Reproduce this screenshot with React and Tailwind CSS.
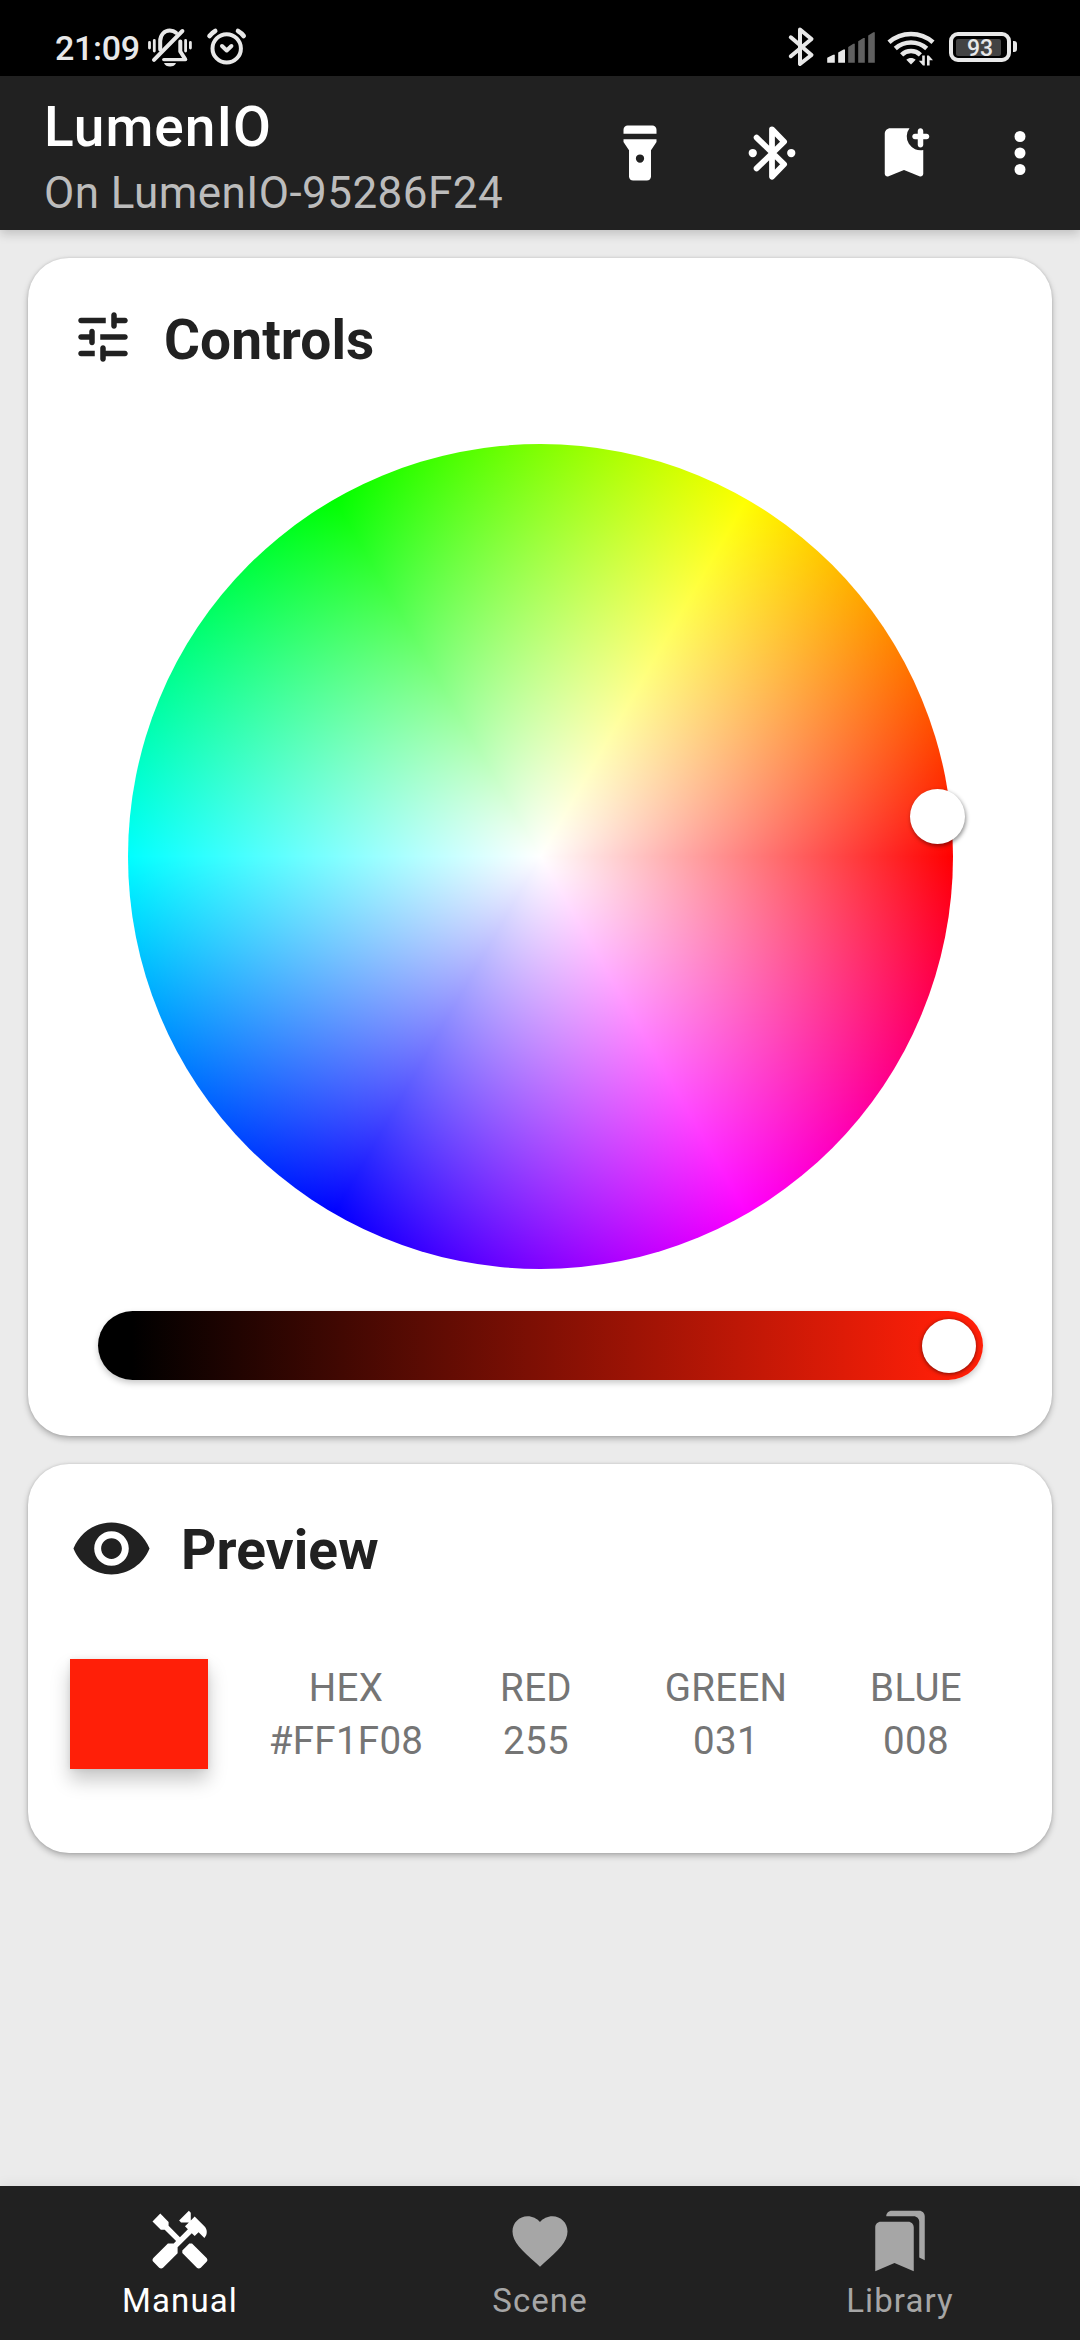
const WHEEL =
  "bg-[radial-gradient(closest-side,#fff,rgba(255,255,255,0)),conic-gradient(from_90deg,#f00,#f0f,#00f,#0ff,#0f0,#ff0,#f00)]";

function StatusBar() {
  return (
    <div className="flex h-[76px] items-start bg-black pl-[55px] pt-[26px] text-[#e8e8e8]">
      <div className="w-[91px] pt-0.5 text-[34px] font-medium leading-[40px] tracking-[-0.3px]">21:09</div>
      <svg className="h-[42px] w-12" viewBox="146 26 48 42" fill="none" stroke="currentColor" strokeLinecap="round" strokeLinejoin="round">
        <path d="M149.500 42.500v5.500M154.300 40.500v10.500M185.600 40.500v10.500M190.400 42.500v5.500" strokeWidth="2.800" />
        <path d="M160.200 49.500V41c0-6 4.100-10.500 9.600-10.500 2.800 0 4.800.9 6.200 2.200" strokeWidth="4" />
        <path d="M154 59.800L182.400 31" strokeWidth="4" />
        <path d="M180.300 41.500v10l4.800 7.500" strokeWidth="4" />
        <path d="M163.800 59.600h21.700" strokeWidth="3.400" />
        <path d="M164 63h12c-.8 2.300-3.200 3.600-6 3.600s-5.200-1.300-6-3.600z" fill="currentColor" stroke="none" />
      </svg>
      <svg className="ml-3 h-[42px] w-[42px]" viewBox="206 26 42 42" fill="none" stroke="currentColor" strokeLinecap="round" strokeLinejoin="round">
        <circle cx="226.700" cy="48.400" r="14.200" strokeWidth="4" />
        <path d="M209.500 36c1.600-2 3.300-3.600 5.700-5M238 31c2.400 1.400 4.200 3 5.700 5" strokeWidth="4.600" />
        <path d="M222 46l4.700 4.500 4.700-4.500" strokeWidth="4" />
      </svg>
      <svg className="ml-[538px] h-[42px] w-[32px]" viewBox="786 26 32 42" fill="none" stroke="currentColor" strokeWidth="4" strokeLinecap="round" strokeLinejoin="round">
        <path d="M790.800 37.300l20.700 17.700L800 64V29.500l11.500 9.500-20.700 17.200" />
      </svg>
      <svg className="ml-2 h-[42px] w-[52px]" viewBox="826 26 52 42" fill="currentColor">
        <path d="M827.200 62.700v-5l6-3h1.600v8zM838.200 62.700v-10.200l5.300-3h1.500v13.200z" />
        <path d="M848.200 62.700V46.900l5.200-3.200h1.400v19zM858.200 62.700V41.200l5.200-3.200h1.400v24.700zM868.200 62.700V35.500l5.200-3.200h1.400v30.400z" fill="#606060" />
      </svg>
      <svg className="ml-2 h-[42px] w-[50px]" viewBox="886 26 50 42" fill="none" stroke="currentColor" strokeWidth="4.600">
        <path d="M889 42.300c12.500-11.100 31.500-11.100 44 0M895.300 48.500c9-8 22.400-8 31.400 0M901.600 54.800c5.300-5 13.500-5 18.800 0" />
        <path d="M906.300 59.700c2.700-2.300 6.700-2.300 9.400 0l-4.700 4.800z" fill="currentColor" stroke="none" />
        <path d="M924.800 55.500v10h-1.800l-4.200-4.700h3.400v-5.300zM927 65.500v-10h1.800l4.200 4.700h-3.400v5.300z" fill="currentColor" stroke="none" />
      </svg>
      <div className="relative ml-[13px] mt-1.5 flex h-[30px] w-[62px] items-center rounded-[9px] border-[4.500px] border-[#e8e8e8] pl-[3px]">
        <div className="h-[17px] w-[45px] rounded-[2px] bg-[#434343]" />
        <span className="absolute inset-0 flex items-center justify-center pt-0.5 text-[23px] font-medium leading-none">93</span>
        <span className="absolute -right-[10px] top-[5px] h-[11px] w-1 rounded-r-[3px] bg-[#e8e8e8]" />
      </div>
    </div>
  );
}

function Icon({ d, className }) {
  return (
    <svg viewBox="0 0 24 24" fill="currentColor" className={className}>
      <path fillRule="evenodd" d={d} />
    </svg>
  );
}

const ICONS = {
  torch:
    "M18 5V3.500C18 2.670 17.330 2 16.500 2h-9C6.670 2 6 2.670 6 3.500V5zM6 7v1l2 3v9.500c0 .83.67 1.500 1.500 1.500h5c.83 0 1.500-.67 1.500-1.500V11l2-3V7zM12 12.500a1.500 1.500 0 1 1 0 3 1.500 1.500 0 0 1 0-3z",
  bookmarkAdd:
    "M20.200 7H19v2c0 .55-.45 1-1 1s-1-.45-1-1V7h-1c-.55 0-1-.45-1-1s.45-1 1-1h1V4c0-.55.45-1 1-1s1 .45 1 1v1h1.200c.55 0 1 .45 1 1s-.45 1-1 1zM19 19.500c0 .72-.73 1.200-1.400.93L12 18.200l-5.600 2.230c-.67.27-1.400-.2-1.400-.93V5c0-1.100.9-2 2-2h7a5 5 0 0 0 5 7.900z",
  more: "M12 4a2 2 0 1 1 0 4 2 2 0 0 1 0-4zM12 10a2 2 0 1 1 0 4 2 2 0 0 1 0-4zM12 16a2 2 0 1 1 0 4 2 2 0 0 1 0-4z",
  tune: "M3 18c0 .55.45 1 1 1h5v-2H4c-.55 0-1 .45-1 1zM3 6c0 .55.45 1 1 1h9V5H4c-.55 0-1 .45-1 1zm10 14v-1h7c.55 0 1-.45 1-1s-.45-1-1-1h-7v-1c0-.55-.45-1-1-1s-1 .45-1 1v4c0 .55.45 1 1 1s1-.45 1-1zM7 10v1H4c-.55 0-1 .45-1 1s.45 1 1 1h3v1c0 .55.45 1 1 1s1-.45 1-1v-4c0-.55-.45-1-1-1s-1 .45-1 1zm14 2c0-.55-.45-1-1-1h-9v2h9c.55 0 1-.45 1-1zm-5-3c.55 0 1-.45 1-1V7h3c.55 0 1-.45 1-1s-.45-1-1-1h-3V4c0-.55-.45-1-1-1s-1 .45-1 1v4c0 .55.45 1 1 1z",
  eye: "M12 4.500C7 4.500 2.730 7.610 1 12c1.730 4.390 6 7.500 11 7.500s9.270-3.110 11-7.500c-1.730-4.390-6-7.500-11-7.500zM12 17c-2.760 0-5-2.240-5-5s2.240-5 5-5 5 2.240 5 5-2.240 5-5 5zm0-8c-1.660 0-3 1.340-3 3s1.340 3 3 3 3-1.340 3-3-1.340-3-3-3z",
  heart:
    "M12 21.350l-1.450-1.320C5.400 15.360 2 12.280 2 8.500 2 5.420 4.420 3 7.500 3c1.740 0 3.410.81 4.500 2.090C13.090 3.810 14.760 3 16.500 3 19.580 3 22 5.420 22 8.500c0 3.780-3.400 6.860-8.550 11.540L12 21.350z",
  bookmarks:
    "M19 18l2 1V3c0-1.100-.9-2-2-2H8.990C7.890 1 7 1.900 7 3h10c1.100 0 2 .9 2 2v13zM15 5H5c-1.100 0-2 .9-2 2v16l7-3 7 3V7c0-1.100-.9-2-2-2z",
  tools:
    "M21.670 18.170l-5.300-5.300h-.99l-2.540 2.540v.99l5.300 5.300c.39.39 1.020.39 1.410 0l2.120-2.120c.39-.39.39-1.020 0-1.410zM17.340 10.190l1.410-1.410 2.120 2.120c1.170-1.170 1.170-3.070 0-4.240l-3.540-3.540-1.410 1.410V1.710l-.7-.71-3.540 3.540.71.71h2.830l-1.410 1.410 1.060 1.060-2.890 2.890-4.130-4.130V5.060L4.830 2.040 2 4.870 5.030 7.900h1.410l4.130 4.130-.85.85H7.600l-5.300 5.300c-.39.39-.39 1.020 0 1.410l2.120 2.120c.39.39 1.020.39 1.410 0l5.300-5.300v-2.120l5.150-5.150z",
};

function AppBar() {
  return (
    <header className="relative z-10 flex h-[154px] items-center bg-[#212121] pl-[44px] text-white shadow-[0_4px_10px_rgba(0,0,0,0.18)]">
      <div className="flex w-[562px] flex-col pt-[9px]">
        <h1 className="text-[55px] font-medium leading-[64px] tracking-[1px]">LumenIO</h1>
        <p className="mt-[7px] text-[44px] leading-[54px] tracking-[0.450px] text-[#bcbcbc]">On LumenIO-95286F24</p>
      </div>
      <Icon d={ICONS.torch} className="ml-px size-[66px]" />
      <svg viewBox="0 0 24 24" className="ml-[66px] size-[66px]" fill="none" stroke="currentColor" strokeLinecap="round" strokeLinejoin="round">
        <path d="M6.400 6.400l10 9.700-4.400 4.500V3.400l4.400 4.500-10 9.700" strokeWidth="2.100" />
        <circle cx="5" cy="12" r="1.500" fill="currentColor" stroke="none" />
        <circle cx="19" cy="12" r="1.500" fill="currentColor" stroke="none" />
      </svg>
      <Icon d={ICONS.bookmarkAdd} className="ml-[66px] size-[66px]" />
      <Icon d={ICONS.more} className="ml-[50px] size-[66px]" />
    </header>
  );
}

const CARD =
  "rounded-[41px] bg-white shadow-[0_3px_6px_rgba(0,0,0,0.26),0_0_3px_rgba(0,0,0,0.12)]";

function ControlsCard() {
  return (
    <section className={`${CARD} h-[1178px]`}>
      <div className="flex h-[186px] items-start pl-[42px] pt-[46px]">
        <Icon d={ICONS.tune} className="size-[66px]" />
        <h2 className="ml-[28px] mt-[3px] text-[55px] font-bold leading-[66px] tracking-[0.1px]">Controls</h2>
      </div>
      <div className={`relative mx-auto size-[825px] rounded-full ${WHEEL}`}>
        <div className="absolute left-[782px] top-[345px] size-[55px] rounded-full bg-white shadow-[1px_2px_4px_rgba(0,0,0,0.45)]" />
      </div>
      <div className="mx-auto mt-[42px] flex h-[69px] w-[885px] items-center justify-end rounded-full bg-[linear-gradient(90deg,#000_34px,#ff1f08_851px)] pr-[7px] shadow-[0_3px_6px_rgba(0,0,0,0.22)]">
        <div className="size-[54px] rounded-full bg-white shadow-[0_1px_4px_rgba(0,0,0,0.55)]" />
      </div>
    </section>
  );
}

const VALUES = [
  ["HEX", "#FF1F08"],
  ["RED", "255"],
  ["GREEN", "031"],
  ["BLUE", "008"],
];

function PreviewCard() {
  return (
    <section className={`${CARD} h-[389px]`}>
      <div className="flex h-[195px] items-start pl-[42px] pt-[43px]">
        <Icon d={ICONS.eye} className="size-[83px]" />
        <h2 className="ml-[28px] mt-[10px] text-[55px] font-bold leading-[66px] tracking-[0.1px]">Preview</h2>
      </div>
      <div className="flex items-center pl-[42px] pr-[41px]">
        <div className="h-[110px] w-[138px] bg-[#ff1f08] shadow-[0_11px_18px_rgba(0,0,0,0.22),0_0_6px_rgba(0,0,0,0.08)]" />
        <dl className="ml-[43px] grid grow grid-cols-4 text-center text-[38.500px] leading-[53px] tracking-[0.3px] text-[#757575]">
          {VALUES.map(([label, value]) => (
            <div key={label}>
              <dt>{label}</dt>
              <dd>{value}</dd>
            </div>
          ))}
        </dl>
      </div>
    </section>
  );
}

const TABS = [
  { label: "Manual", icon: ICONS.tools, color: "text-white" },
  { label: "Scene", icon: ICONS.heart, color: "text-[#a6a6a6]" },
  { label: "Library", icon: ICONS.bookmarks, color: "text-[#a6a6a6]" },
];

function BottomNav() {
  return (
    <nav className="grid h-[154px] grid-cols-3 bg-[#212121] shadow-[0_-2px_12px_rgba(0,0,0,0.06)]">
      {TABS.map((tab) => (
        <div key={tab.label} className={`flex flex-col items-center pt-[22px] ${tab.color}`}>
          <Icon d={tab.icon} className="size-[66px]" />
          <span className="mt-2 text-[33px] leading-[38px] tracking-[1.100px]">{tab.label}</span>
        </div>
      ))}
    </nav>
  );
}

export default function App() {
  return (
    <div className="flex h-[2340px] w-[1080px] flex-col overflow-hidden bg-[#ebebeb] font-[Roboto,sans-serif] text-[#212121]">
      <StatusBar />
      <AppBar />
      <main className="flex grow flex-col gap-7 px-7 pt-7">
        <ControlsCard />
        <PreviewCard />
      </main>
      <BottomNav />
    </div>
  );
}
